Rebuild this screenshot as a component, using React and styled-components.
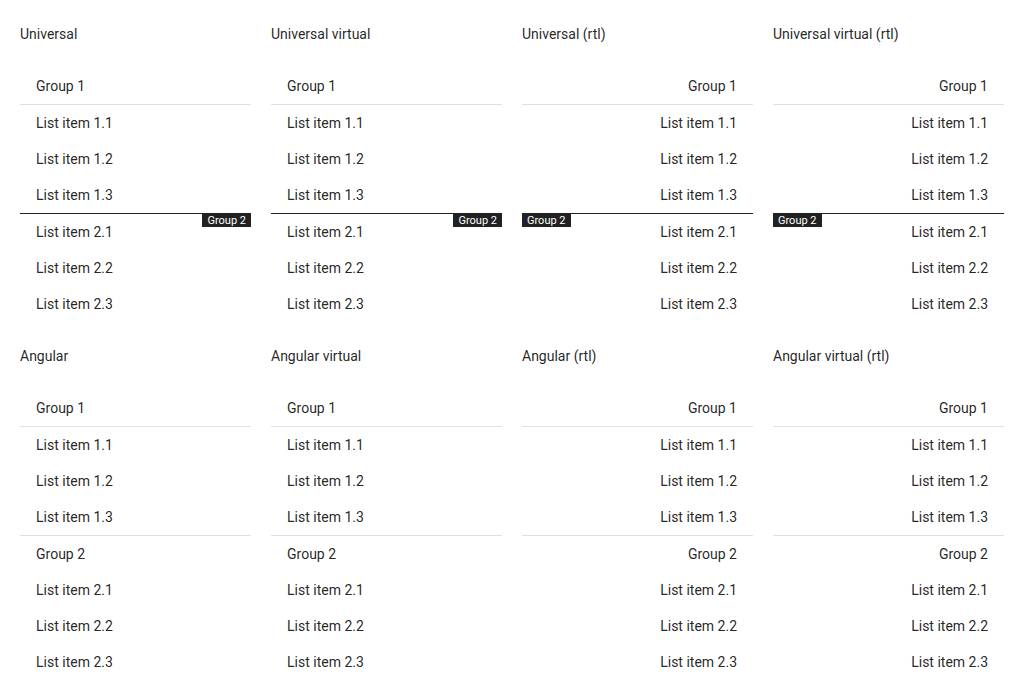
import React from "react";
import styled, { createGlobalStyle } from "styled-components";

const GlobalStyle = createGlobalStyle`
  body {
    margin: 0;
    background: #fff;
    font-family: Roboto, "Liberation Sans", sans-serif;
    color: rgba(0, 0, 0, 0.87);
  }
`;

const Page = styled.div`
  display: grid;
  grid-template-columns: repeat(4, 231px);
  column-gap: 20px;
  row-gap: 20px;
  padding: 20px;
`;

const Section = styled.section`
  direction: ${(p) => (p.$rtl ? "rtl" : "ltr")};
`;

const Title = styled.h3`
  margin: 0 0 20px;
  font-size: 14px;
  font-weight: 400;
  line-height: 28px;
  direction: ltr;
  text-align: left;
`;

const List = styled.div`
  display: flex;
  flex-direction: column;
`;

const Row = styled.div`
  height: 36px;
  display: flex;
  align-items: center;
  padding: 0 16px;
  font-size: 14px;
`;

const Divider = styled.div`
  height: 1px;
  background: #e0e0e0;
`;

const StickyLine = styled.div`
  position: relative;
  height: 1px;
  background: #212121;
`;

const Badge = styled.span`
  position: absolute;
  top: 0;
  ${(p) => (p.$rtl ? "left: 0;" : "right: 0;")}
  height: 14px;
  padding: 1px 5px 0;
  box-sizing: border-box;
  background: #212121;
  color: #fff;
  font-size: 11px;
  line-height: 13px;
  direction: ltr;
`;

const groups = [
  { name: "Group 1", items: ["List item 1.1", "List item 1.2", "List item 1.3"] },
  { name: "Group 2", items: ["List item 2.1", "List item 2.2", "List item 2.3"] },
];

function UniversalList({ rtl }) {
  return (
    <List>
      <Row>{groups[0].name}</Row>
      <Divider />
      {groups[0].items.map((t) => <Row key={t}>{t}</Row>)}
      <StickyLine>
        <Badge $rtl={rtl}>{groups[1].name}</Badge>
      </StickyLine>
      {groups[1].items.map((t) => <Row key={t}>{t}</Row>)}
    </List>
  );
}

function AngularList() {
  return (
    <List>
      {groups.map((g, i) => (
        <React.Fragment key={g.name}>
          {i > 0 && <Divider />}
          <Row>{g.name}</Row>
          {i === 0 && <Divider />}
          {g.items.map((t) => <Row key={t}>{t}</Row>)}
        </React.Fragment>
      ))}
    </List>
  );
}

const sections = [
  { title: "Universal", kind: "universal" },
  { title: "Universal virtual", kind: "universal" },
  { title: "Universal (rtl)", kind: "universal", rtl: true },
  { title: "Universal virtual (rtl)", kind: "universal", rtl: true },
  { title: "Angular", kind: "angular" },
  { title: "Angular virtual", kind: "angular" },
  { title: "Angular (rtl)", kind: "angular", rtl: true },
  { title: "Angular virtual (rtl)", kind: "angular", rtl: true },
];

export default function App() {
  return (
    <>
      <GlobalStyle />
      <Page>
        {sections.map((s) => (
          <Section key={s.title} $rtl={s.rtl}>
            <Title>{s.title}</Title>
            {s.kind === "universal" ? <UniversalList rtl={s.rtl} /> : <AngularList />}
          </Section>
        ))}
      </Page>
    </>
  );
}
